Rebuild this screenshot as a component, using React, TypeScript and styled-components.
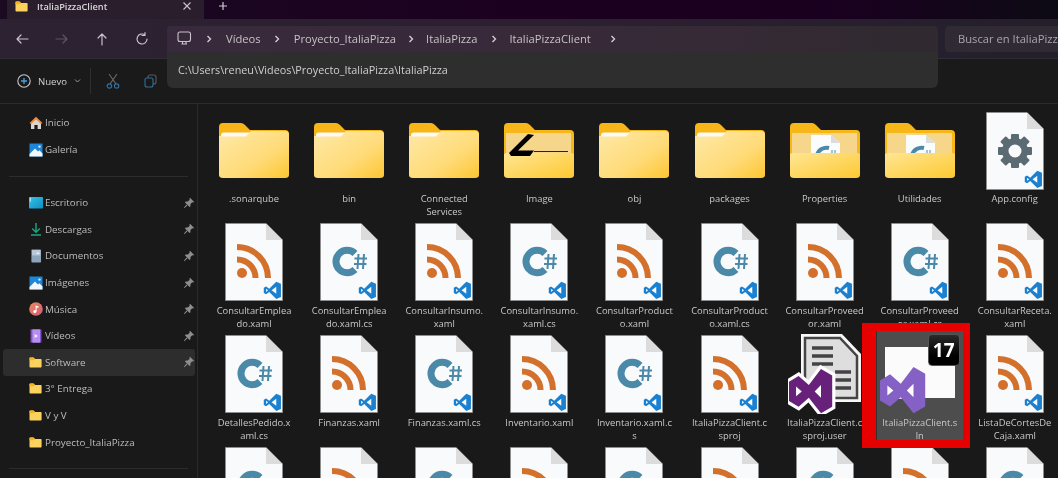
import React from "react";
import styled, { createGlobalStyle } from "styled-components";

const Global = createGlobalStyle`
  html, body { margin: 0; padding: 0; background: #191919; }
  * { box-sizing: border-box; }
`;

const Window = styled.div`
  width: 1058px;
  height: 478px;
  overflow: hidden;
  display: flex;
  flex-direction: column;
  background: #191919;
  color: #c8c8c8;
  font-family: "Open Sans", "Noto Sans", sans-serif;
  filter: blur(0.4px);
`;

const TabBar = styled.div`
  height: 19px;
  flex: none;
  display: flex;
  align-items: flex-start;
  padding-left: 7px;
  background: linear-gradient(90deg, #1a0a22 0%, #1c0020 50%, #1a0020 78%, #0d0a14 100%);
`;
const Tab = styled.div`
  width: 197px;
  height: 19px;
  display: flex;
  align-items: center;
  padding: 0 12px 7px 8px;
  gap: 9px;
  background: #2a1e2d;
`;
const TabTitle = styled.span`
  flex: 1;
  font-size: 9.2px;
  color: #d8d4d8;
  font-weight: 600;
`;
const NewTab = styled.span`
  margin-left: 14px;
  margin-top: 1px;
  display: flex;
`;

const Toolbar = styled.div`
  height: 40px;
  flex: none;
  display: flex;
  align-items: center;
  padding-left: 14px;
  background: linear-gradient(90deg, #2c2231 0%, #2b1f30 60%, #241f2b 100%);
  border-bottom: 1px solid #2f2d33;
`;
const NavGroup = styled.div`
  width: 153px;
  flex: none;
  display: flex;
  align-items: center;
  gap: 24px;
`;
const NavButton = styled.span<{ $dim?: boolean }>`
  width: 16px;
  height: 16px;
  display: flex;
  color: ${(p) => (p.$dim ? "#5c5560" : "#c6c2c8")};
`;
const AddressWrap = styled.div`
  position: relative;
  width: 771px;
  height: 26px;
  flex: none;
`;
const Address = styled.div`
  height: 26px;
  display: flex;
  align-items: center;
  padding-left: 10px;
  background: linear-gradient(90deg, #39293c, #372a38 60%, #30292f 100%);
  border-radius: 4px 4px 0 0;
  font-size: 11.2px;
  color: #c6c2c6;
`;
const Crumb = styled.span`
  white-space: nowrap;
`;
const CrumbSep = styled.span<{ $w: number }>`
  width: ${(p) => p.$w}px;
  display: flex;
  justify-content: center;
  color: #d0ccd0;
`;
const PathPopup = styled.div`
  position: absolute;
  z-index: 5;
  left: 0;
  right: 0;
  top: 26px;
  height: 36px;
  padding-left: 11px;
  display: flex;
  align-items: center;
  background: #2e2e2e;
  border-radius: 0 0 6px 6px;
  font-size: 10.8px;
  color: #cfcfcf;
  white-space: nowrap;
`;
const Search = styled.div`
  margin-left: 7px;
  flex: 1;
  height: 26px;
  display: flex;
  align-items: center;
  padding-left: 13px;
  background: #302a34;
  border-radius: 4px 0 0 4px;
  font-size: 11.2px;
  color: #aaa6ac;
  white-space: nowrap;
  overflow: hidden;
`;

const CommandBar = styled.div`
  height: 45px;
  flex: none;
  display: flex;
  align-items: center;
  padding-left: 17px;
  background: #1a1a1a;
  border-bottom: 1px solid #2b2b2b;
`;
const NewButton = styled.div`
  display: flex;
  align-items: center;
  gap: 7px;
  font-size: 9.6px;
  color: #cfcfcf;
  width: 73px;
`;
const CommandDivider = styled.span`
  width: 1px;
  height: 26px;
  background: #2f2f2f;
`;
const CommandIcon = styled.span<{ $gap: number }>`
  margin-left: ${(p) => p.$gap}px;
  display: flex;
`;

const Body = styled.div`
  flex: 1;
  min-height: 0;
  display: flex;
`;
const Sidebar = styled.nav`
  width: 198px;
  flex: none;
  padding: 5.7px 2px 0 3px;
  border-right: 1px solid #2a2a2a;
`;
const NavRow = styled.div<{ $active?: boolean }>`
  height: 26.6px;
  display: flex;
  align-items: center;
  padding: 0 0 0 26px;
  border-radius: 3px;
  background: ${(p) => (p.$active ? "#2d2d2d" : "transparent")};
  font-size: 9.8px;
  color: #bdbdbd;
`;
const NavIcon = styled.span`
  width: 16px;
  height: 14px;
  display: flex;
  align-items: center;
  flex: none;
`;
const NavLabel = styled.span`
  flex: 1;
  white-space: nowrap;
`;
const PinSlot = styled.span`
  width: 14px;
  margin-right: 0;
  display: flex;
  justify-content: flex-end;
  flex: none;
`;
const NavSep = styled.div`
  height: 26.6px;
  display: flex;
  align-items: center;
  padding: 0 7px 0 6px;
  &::after {
    content: "";
    flex: 1;
    height: 1px;
    background: #2c2c2c;
  }
`;

const Grid = styled.main`
  flex: 1;
  display: grid;
  grid-template-columns: repeat(9, 95.1px);
  grid-auto-rows: 111.8px;
  padding: 2px 0 0 8.5px;
  align-content: start;
`;
const Cell = styled.div<{ $selected?: boolean }>`
  position: relative;
  display: flex;
  flex-direction: column;
  align-items: center;
  padding-top: 6px;
  background: ${(p) =>
    p.$selected ? "linear-gradient(90deg, #333 0 5px, #4d4d4d 5px)" : "transparent"};
`;
const IconBox = styled.div`
  position: relative;
  height: 77px;
  display: flex;
  align-items: center;
  justify-content: center;
  flex: none;
`;
const Label = styled.div`
  margin-top: 3px;
  font-size: 9.4px;
  line-height: 13.2px;
  color: #c8c8c8;
  text-align: center;
  white-space: nowrap;
`;
const RedFrame = styled.div`
  position: absolute;
  z-index: 3;
  left: -10px;
  top: -6.5px;
  width: 108px;
  height: 125px;
  border: solid #e60000;
  border-width: 8px 7px 8px 14px;
`;
const VersionBadge = styled.div`
  position: absolute;
  left: 48px;
  top: -2px;
  width: 32px;
  height: 32px;
  border-radius: 4px;
  background: linear-gradient(180deg, #2a2a2a, #000 70%);
  border: 1px solid #555;
  color: #fff;
  font-family: "Open Sans", sans-serif;
  font-weight: 700;
  font-size: 19px;
  line-height: 30px;
  text-align: center;
`;

const Arrow = ({ d }: { d: string }) => (
  <svg width="16" height="16" viewBox="0 0 16 16" fill="none" stroke="currentColor" strokeWidth="1.2" strokeLinecap="round" strokeLinejoin="round">
    <path d={d} />
  </svg>
);

const Chevron = () => (
  <svg width="8" height="10" viewBox="0 0 8 10" fill="none" stroke="currentColor" strokeWidth="1.4">
    <path d="M2.5 2 L5.5 5 L2.5 8" />
  </svg>
);

const Monitor = () => (
  <svg width="15" height="15" viewBox="0 0 15 15" fill="none" stroke="#c8c4c8" strokeWidth="1.1">
    <rect x="1" y="1" width="12.5" height="9.5" rx="2" />
    <path d="M4.5 13 H10 M5.5 11 V12.5 M9 11 V12.5" />
  </svg>
);

const SmallFolder = () => (
  <svg width="13" height="11" viewBox="0 0 13 11">
    <path d="M0.5 1.2 Q0.5 0.4 1.3 0.4 H4.5 L6 2 H11.8 Q12.6 2 12.6 2.8 V9.8 Q12.6 10.6 11.8 10.6 H1.3 Q0.5 10.6 0.5 9.8 Z" fill="#fcd25e" />
    <path d="M0.5 1.2 Q0.5 0.4 1.3 0.4 H4.5 L6 2 L4.5 3.2 H0.5 Z" fill="#f3b519" />
  </svg>
);

const Pin = () => (
  <svg width="12" height="12" viewBox="0 0 12 12" fill="#8e8e8e">
    <path d="M7 0.8 L11.2 5 L10.2 5.6 L9.2 5.3 L7.4 7.2 L7.4 9.4 L6.6 10 L2 5.4 L2.6 4.6 L4.8 4.6 L6.7 2.8 L6.4 1.8 Z" />
    <path d="M3.5 7.6 L4.4 8.5 L1.2 11.2 L0.8 10.8 Z" />
  </svg>
);

const HomeIcon = () => (
  <svg width="14" height="14" viewBox="0 0 14 14">
    <path d="M2 6.5 L7 2.5 L12 6.5 V13 H8.6 V9 H5.4 V13 H2 Z" fill="#d9d4d0" />
    <path d="M0.5 7 L7 0.8 L13.5 7 L12 8 L7 3.4 L2 8 Z" fill="#ec8b3b" />
  </svg>
);
const PictureIcon = () => (
  <svg width="14" height="14" viewBox="0 0 14 14">
    <rect x="0.5" y="0.5" width="13" height="13" fill="#1e86d8" />
    <path d="M0.5 13.5 V11 L6 5.6 L9 8.4 L10.4 7.2 L13.5 10.4 V13.5 Z" fill="#f3f7fb" />
    <circle cx="10.5" cy="3.6" r="1.2" fill="#cfe8fb" />
  </svg>
);
const DesktopIcon = () => (
  <svg width="14" height="12" viewBox="0 0 14 12">
    <defs>
      <linearGradient id="dsk" x1="0" y1="0" x2="1" y2="1">
        <stop offset="0" stopColor="#36c2e6" />
        <stop offset="1" stopColor="#0f8fc2" />
      </linearGradient>
    </defs>
    <rect width="14" height="11.4" rx="0.6" fill="url(#dsk)" />
    <rect x="0.8" y="0.8" width="1" height="4" fill="#bdf0ff" />
  </svg>
);
const DownloadIcon = () => (
  <svg width="14" height="14" viewBox="0 0 14 14" fill="none" stroke="#1fa67f" strokeWidth="1.4">
    <path d="M7 1 V10 M3.2 6.5 L7 10.2 L10.8 6.5 M2 13 H12" />
  </svg>
);
const DocsIcon = () => (
  <svg width="14" height="14" viewBox="0 0 14 14">
    <rect x="2.4" y="0.4" width="9.6" height="13.2" rx="0.8" fill="#8ea4bb" />
    <rect x="3" y="1" width="8.4" height="5.4" fill="#b9c8d6" />
    <rect x="7.6" y="3.6" width="2.6" height="1.4" fill="#eef3f7" />
  </svg>
);
const MusicIcon = () => (
  <svg width="14" height="14" viewBox="0 0 14 14">
    <defs>
      <linearGradient id="msc" x1="0" y1="0" x2="1" y2="1">
        <stop offset="0" stopColor="#ef8a5c" />
        <stop offset="1" stopColor="#cf5a7a" />
      </linearGradient>
    </defs>
    <circle cx="7" cy="7" r="6.8" fill="url(#msc)" />
    <circle cx="5.8" cy="9.6" r="1.5" fill="#fff" />
    <path d="M6.6 9.6 V3.6 L9.6 4.4 V5.8 L7.6 5.4 V9.6 Z" fill="#fff" />
  </svg>
);
const VideoIcon = () => (
  <svg width="14" height="14" viewBox="0 0 14 14">
    <rect x="1.6" y="0.4" width="10.8" height="13.2" fill="#8a4fd8" />
    <rect x="3.4" y="0.4" width="7.6" height="13.2" fill="#b691ec" />
    <path d="M5.6 5 L9 7 L5.6 9 Z" fill="#f4efff" />
  </svg>
);

const NewCircle = () => (
  <svg width="14" height="14" viewBox="0 0 14 14" fill="none">
    <circle cx="7" cy="7" r="6.2" stroke="#c9c9c9" strokeWidth="1.1" />
    <path d="M7 4 V10 M4 7 H10" stroke="#4aa3e0" strokeWidth="1.3" />
  </svg>
);
const Scissors = () => (
  <svg width="14" height="16" viewBox="0 0 14 16" fill="none">
    <path d="M3 1 L10 11 M11 1 L4 11" stroke="#6a6a6a" strokeWidth="1.1" />
    <circle cx="3.4" cy="13" r="2.2" stroke="#2f6f9c" strokeWidth="1.2" />
    <circle cx="10.6" cy="13" r="2.2" stroke="#2f6f9c" strokeWidth="1.2" />
  </svg>
);
const CopyIcon = () => (
  <svg width="13" height="14" viewBox="0 0 13 14" fill="none" strokeWidth="1.1">
    <rect x="4" y="1" width="8" height="9" rx="2" stroke="#5a5a5a" />
    <rect x="1" y="4" width="8" height="9" rx="2" stroke="#2f6f9c" fill="#191919" />
  </svg>
);

const FolderPlain = () => (
  <svg width="70" height="56" viewBox="0 0 70 56">
    <defs>
      <linearGradient id="fp" x1="0" y1="0" x2="1" y2="1">
        <stop offset="0" stopColor="#ffe9a8" />
        <stop offset="0.6" stopColor="#ffdb78" />
        <stop offset="1" stopColor="#fdc732" />
      </linearGradient>
    </defs>
    <path d="M0 4 Q0 0 4 0 H22 Q24 0 26 2 L31 7 H66 Q70 7 70 11 V30 H0 Z" fill="#f8b517" />
    <path d="M0 13 H27 L32 8 H66 Q70 8 70 12 V52 Q70 55 66 55 H4 Q0 55 0 52 Z" fill="url(#fp)" />
    <path d="M2 12 Q2 9.4 5 9.4 H31 L27 13.4 H2 Z" fill="#fbfaf6" />
  </svg>
);

const FolderOpen = ({ kind }: { kind: "cs" | "image" }) => (
  <svg width="70" height="56" viewBox="0 0 70 56">
    <defs>
      <linearGradient id={`fo${kind}`} x1="0" y1="0" x2="1" y2="1">
        <stop offset="0" stopColor="#ffe692" />
        <stop offset="1" stopColor="#fdc932" />
      </linearGradient>
    </defs>
    <path d="M0 4 Q0 0 4 0 H22 Q24 0 26 2 L31 7 H66 Q70 7 70 11 V34 H0 Z" fill="#f8b718" />
    <path d="M2 10 H67 V33 H2 Z" fill="#f5d68a" />
    {kind === "cs" && (
      <g>
        <path d="M21 12 H41 L50 20 V34 H21 Z" fill="#fbfcfd" />
        <path d="M41 12 L50 20 H41 Z" fill="#dcdcdc" />
        <path d="M39 25 A10 10 0 0 0 27 32" fill="none" stroke="#4a89a8" strokeWidth="4" />
        <path d="M42 27 V31 M45 27 V31" stroke="#4a89a8" strokeWidth="1" />
      </g>
    )}
    <path d="M0 32 Q0 30 3 30 H67 Q70 30 70 32 V52 Q70 55 66 55 H4 Q0 55 0 52 Z" fill={`url(#fo${kind})`} />
    {kind === "image" && (
      <g>
        <path d="M5 30 L24 11 L30 12 L14 27.5 H30 L26 33 H7 Z" fill="#000" />
        <path d="M30 28.5 H64" stroke="#2a2415" strokeWidth="1.2" />
      </g>
    )}
  </svg>
);

const VsCodeMark = () => (
  <g transform="translate(38 58) scale(0.78)">
    <path
      fillRule="evenodd"
      d="M17 1 L8 10 L4 7 L1 8.5 V15.5 L4 17 L8 14 L17 23 L23 20.5 V3.5 Z M17 7.5 V16.5 L11 12 Z M4 9.8 L6.5 12 L4 14.2 Z"
      fill="#1b80cf"
    />
  </g>
);

const Page = ({ children }: { children: React.ReactNode }) => (
  <svg width="58" height="78" viewBox="0 0 58 78">
    <path d="M0.5 0.5 H41 L57.5 17 V77.5 H0.5 Z" fill="#f9fafb" stroke="#8f8f8f" strokeWidth="0.8" />
    <path d="M41 0.5 V17 H57.5 Z" fill="#dcdcdc" />
    {children}
    <VsCodeMark />
  </svg>
);

const CsFile = () => (
  <Page>
    <path d="M35 30.5 A11.2 11.2 0 1 0 35 46.5" fill="none" stroke="#4a89a8" strokeWidth="7" />
    <path d="M38.5 31 L37.5 46 M44 31 L43 46 M34.5 35.5 H47 M34 41 H46.5" stroke="#4a89a8" strokeWidth="2" fill="none" />
  </Page>
);
const RssFile = () => (
  <Page>
    <circle cx="17" cy="50" r="5" fill="#d2702c" />
    <path d="M12 36.5 A18.5 18.5 0 0 1 30.5 55" fill="none" stroke="#d2702c" strokeWidth="6" />
    <path d="M12 24 A31 31 0 0 1 43 55" fill="none" stroke="#d2702c" strokeWidth="6" />
  </Page>
);
const GearFile = () => (
  <Page>
    <g transform="translate(29 39)" fill="#5c6b73">
      {[0, 45, 90, 135, 180, 225, 270, 315].map((a) => (
        <rect key={a} x="-4" y="-17" width="8" height="8" rx="1" transform={`rotate(${a})`} />
      ))}
      <path
        fillRule="evenodd"
        d="M-13 0 A13 13 0 1 1 13 0 A13 13 0 1 1 -13 0 Z M-6.5 0 A6.5 6.5 0 1 0 6.5 0 A6.5 6.5 0 1 0 -6.5 0 Z"
      />
    </g>
  </Page>
);

const VS_PATH =
  "M0 40 L30 22 L62 50 L100 0 L135 20 V118 L100 138 L62 90 L30 118 L0 100 Z M22 55 L40 70 L22 85 Z M80 70 L100 50 V90 Z";

const ProjUser = () => (
  <svg width="73" height="80" viewBox="0 0 73 80">
    <path d="M13 0 H54 L73 20 V68 H13 Z" fill="#f7f7f7" />
    <path d="M17 4 H52 L69 22 V64 H17 Z" fill="#dedede" stroke="#444" strokeWidth="2.5" />
    <path d="M24 14 H45 M24 22 H45 M24 30 H45 M47 38 H63 M47 46 H63 M47 54 H63" stroke="#444" strokeWidth="3.5" />
    <g transform="translate(1 35) scale(0.32)">
      <path d={VS_PATH} fill="#fff" stroke="#fff" strokeWidth="20" fillRule="nonzero" />
      <path d={VS_PATH} fill="#68217a" fillRule="evenodd" />
    </g>
  </svg>
);

const SlnIcon = () => (
  <IconBox>
    <svg width="80" height="80" viewBox="0 0 80 80">
      <rect x="5" y="13" width="70" height="51" fill="#fbfbfb" />
      <g transform="translate(0 33) scale(0.335)">
        <path d="M15 50 H110 V95 H15 Z" fill="#fff" />
        <path d={VS_PATH} fill="#8661c5" fillRule="evenodd" />
      </g>
    </svg>
    <VersionBadge>17</VersionBadge>
  </IconBox>
);

type Kind = "folder" | "folderCs" | "folderImg" | "gear" | "rss" | "cs" | "user" | "sln";
const icons: Record<Exclude<Kind, "sln">, React.ReactNode> = {
  folder: <FolderPlain />,
  folderCs: <FolderOpen kind="cs" />,
  folderImg: <FolderOpen kind="image" />,
  gear: <GearFile />,
  rss: <RssFile />,
  cs: <CsFile />,
  user: <ProjUser />,
};

const items: { kind: Kind; lines: string[] }[] = [
  { kind: "folder", lines: [".sonarqube"] },
  { kind: "folder", lines: ["bin"] },
  { kind: "folder", lines: ["Connected", "Services"] },
  { kind: "folderImg", lines: ["Image"] },
  { kind: "folder", lines: ["obj"] },
  { kind: "folder", lines: ["packages"] },
  { kind: "folderCs", lines: ["Properties"] },
  { kind: "folderCs", lines: ["Utilidades"] },
  { kind: "gear", lines: ["App.config"] },
  { kind: "rss", lines: ["ConsultarEmplea", "do.xaml"] },
  { kind: "cs", lines: ["ConsultarEmplea", "do.xaml.cs"] },
  { kind: "rss", lines: ["ConsultarInsumo.", "xaml"] },
  { kind: "cs", lines: ["ConsultarInsumo.", "xaml.cs"] },
  { kind: "rss", lines: ["ConsultarProduct", "o.xaml"] },
  { kind: "cs", lines: ["ConsultarProduct", "o.xaml.cs"] },
  { kind: "rss", lines: ["ConsultarProveed", "or.xaml"] },
  { kind: "cs", lines: ["ConsultarProveed", "or.xaml.cs"] },
  { kind: "rss", lines: ["ConsultarReceta.", "xaml"] },
  { kind: "cs", lines: ["DetallesPedido.x", "aml.cs"] },
  { kind: "rss", lines: ["Finanzas.xaml"] },
  { kind: "cs", lines: ["Finanzas.xaml.cs"] },
  { kind: "rss", lines: ["Inventario.xaml"] },
  { kind: "cs", lines: ["Inventario.xaml.c", "s"] },
  { kind: "rss", lines: ["ItaliaPizzaClient.c", "sproj"] },
  { kind: "user", lines: ["ItaliaPizzaClient.c", "sproj.user"] },
  { kind: "sln", lines: ["ItaliaPizzaClient.s", "ln"] },
  { kind: "rss", lines: ["ListaDeCortesDe", "Caja.xaml"] },
  { kind: "cs", lines: [] },
  { kind: "rss", lines: [] },
  { kind: "cs", lines: [] },
  { kind: "rss", lines: [] },
  { kind: "cs", lines: [] },
  { kind: "rss", lines: [] },
  { kind: "cs", lines: [] },
  { kind: "rss", lines: [] },
  { kind: "cs", lines: [] },
];

type Nav = { label?: string; icon?: React.ReactNode; pin?: boolean; active?: boolean };
const nav: Nav[] = [
  { label: "Inicio", icon: <HomeIcon /> },
  { label: "Galería", icon: <PictureIcon /> },
  {},
  { label: "Escritorio", icon: <DesktopIcon />, pin: true },
  { label: "Descargas", icon: <DownloadIcon />, pin: true },
  { label: "Documentos", icon: <DocsIcon />, pin: true },
  { label: "Imágenes", icon: <PictureIcon />, pin: true },
  { label: "Música", icon: <MusicIcon />, pin: true },
  { label: "Vídeos", icon: <VideoIcon />, pin: true },
  { label: "Software", icon: <SmallFolder />, pin: true, active: true },
  { label: "3° Entrega", icon: <SmallFolder /> },
  { label: "V y V", icon: <SmallFolder /> },
  { label: "Proyecto_ItaliaPizza", icon: <SmallFolder /> },
  {},
];

const crumbs: [string, number][] = [
  ["Vídeos", 33],
  ["Proyecto_ItaliaPizza", 30],
  ["ItaliaPizza", 32],
  ["ItaliaPizzaClient", 44],
];

export default function App() {
  return (
    <Window>
      <Global />
      <TabBar>
        <Tab>
          <SmallFolder />
          <TabTitle>ItaliaPizzaClient</TabTitle>
          <svg width="10" height="10" viewBox="0 0 10 10" stroke="#c8c4c8" strokeWidth="1.1">
            <path d="M1.5 1.5 L8.5 8.5 M8.5 1.5 L1.5 8.5" />
          </svg>
        </Tab>
        <NewTab>
          <svg width="10" height="10" viewBox="0 0 10 10" stroke="#d0ccd0" strokeWidth="1.2">
            <path d="M5 1 V9 M1 5 H9" />
          </svg>
        </NewTab>
      </TabBar>
      <Toolbar>
        <NavGroup>
          <NavButton><Arrow d="M14 8 H3 M7 4 L3 8 L7 12" /></NavButton>
          <NavButton $dim><Arrow d="M2 8 H13 M9 4 L13 8 L9 12" /></NavButton>
          <NavButton><Arrow d="M8 14 V3 M4 7 L8 3 L12 7" /></NavButton>
          <NavButton><Arrow d="M13 8 A5 5 0 1 1 11 4 M11 1.5 V4.5 H8" /></NavButton>
        </NavGroup>
        <AddressWrap>
          <Address>
            <Monitor />
            <CrumbSep $w={34}><Chevron /></CrumbSep>
            {crumbs.map(([name, w]) => (
              <React.Fragment key={name}>
                <Crumb>{name}</Crumb>
                <CrumbSep $w={w}><Chevron /></CrumbSep>
              </React.Fragment>
            ))}
          </Address>
          <PathPopup>C:\Users\reneu\Videos\Proyecto_ItaliaPizza\ItaliaPizza</PathPopup>
        </AddressWrap>
        <Search>Buscar en ItaliaPizzaClient</Search>
      </Toolbar>
      <CommandBar>
        <NewButton>
          <NewCircle />
          Nuevo
          <svg width="7" height="6" viewBox="0 0 7 6" fill="none" stroke="#9a9a9a" strokeWidth="1">
            <path d="M1 1.5 L3.5 4 L6 1.5" />
          </svg>
        </NewButton>
        <CommandDivider />
        <CommandIcon $gap={15}><Scissors /></CommandIcon>
        <CommandIcon $gap={24}><CopyIcon /></CommandIcon>
      </CommandBar>
      <Body>
        <Sidebar>
          {nav.map((n, i) =>
            n.label ? (
              <NavRow key={i} $active={n.active}>
                <NavIcon>{n.icon}</NavIcon>
                <NavLabel>{n.label}</NavLabel>
                {n.pin && <PinSlot><Pin /></PinSlot>}
              </NavRow>
            ) : (
              <NavSep key={i} />
            )
          )}
        </Sidebar>
        <Grid>
          {items.map((it, i) => (
            <Cell key={i} $selected={it.kind === "sln"}>
              {it.kind === "sln" ? <SlnIcon /> : <IconBox>{icons[it.kind]}</IconBox>}
              <Label>
                {it.lines.map((l) => (
                  <div key={l}>{l}</div>
                ))}
              </Label>
              {it.kind === "sln" && <RedFrame />}
            </Cell>
          ))}
        </Grid>
      </Body>
    </Window>
  );
}
